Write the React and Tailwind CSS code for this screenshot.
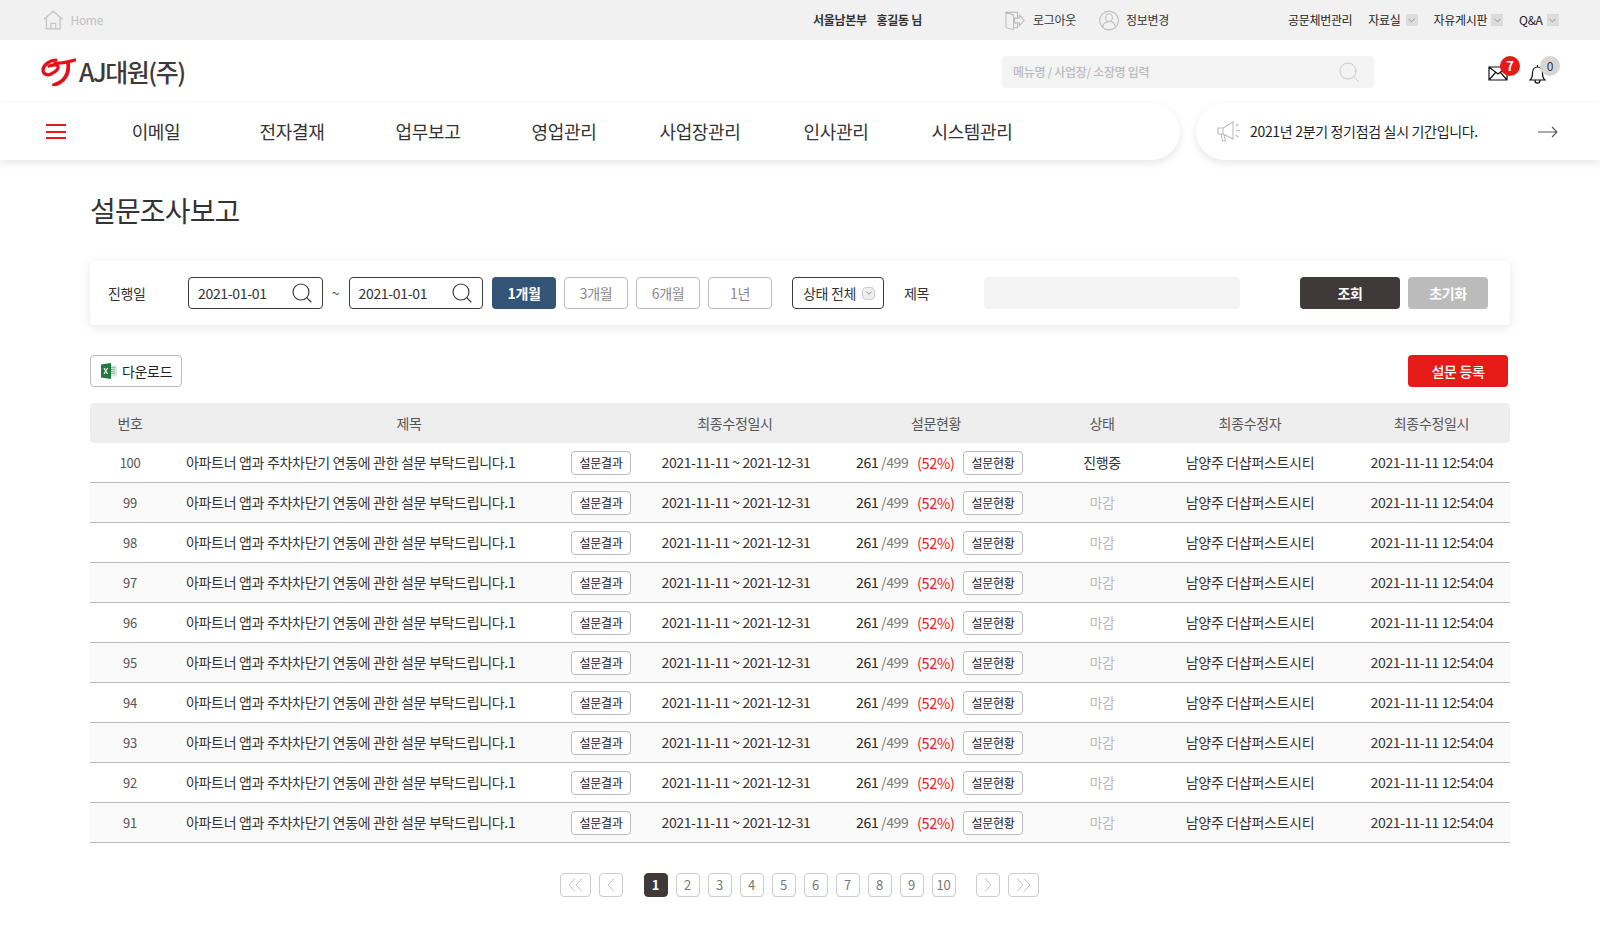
import { ChevronDown, Search } from "lucide-react";

const navItems = ["이메일", "전자결재", "업무보고", "영업관리", "사업장관리", "인사관리", "시스템관리"];
const columns = "grid grid-cols-[80px_478px_174px_228px_104px_192px_164px]";
const rows = [100, 99, 98, 97, 96, 95, 94, 93, 92, 91];

const ArrowBox = () => (
    <span className="flex h-3 w-3 items-center justify-center bg-[#dcdcdc]">
        <ChevronDown size={11} strokeWidth={1.3} className="text-[#666]" />
    </span>
);

const Logo = () => (
    <svg width="35" height="28" viewBox="0 0 35 28" fill="none" stroke="#e60f18" strokeLinecap="round">
        <path d="M15 2C9 2 2 7 2 12c0 4 4 6 8 4 4-2 8-5 7-8-1-2-5-1-9 0" strokeWidth="3.200" />
        <path d="M14 5c6 1 13-1 20-3" strokeWidth="3.200" />
        <path d="M27 5c1 7-1 13-5 17-3 3-6 4-9 5" strokeWidth="3.800" />
    </svg>
);

const HomeIcon = () => (
    <svg width="21" height="20" viewBox="0 0 21 20" fill="none" stroke="#c4c4c4" strokeWidth="1.300">
        <path d="M.8 9.500 10.500 1l9.700 8.500M3.500 7.500V19h14V7.500M8 19v-5.500h5V19" />
    </svg>
);

const LogoutIcon = () => (
    <svg width="21" height="19" viewBox="0 0 21 19" fill="none" stroke="#bdbdbd" strokeWidth="1.100">
        <path d="M1 1h12v6M13 12v5H9M1 1l8 3v15l-8-2zM10 7h5V4l5 5.500-5 5.500v-3h-5z" />
    </svg>
);

const UserIcon = () => (
    <svg width="21" height="21" viewBox="0 0 21 21" fill="none" stroke="#bdbdbd" strokeWidth="1.100">
        <circle cx="10.500" cy="10.500" r="9.800" />
        <ellipse cx="10.500" cy="7.500" rx="3.500" ry="4" />
        <path d="M4 18c0-4 2.500-6.500 6.500-6.500S17 14 17 18" />
    </svg>
);

const MailIcon = () => (
    <svg width="20" height="15" viewBox="0 0 20 15" fill="none" stroke="#111" strokeWidth="1.200">
        <path d="M1 1h18v13H1zM1 1l9 7 9-7M1 14l6.500-7.500M19 14l-6.500-7.500" />
    </svg>
);

const BellIcon = () => (
    <svg width="17" height="20" viewBox="0 0 17 20" fill="none" stroke="#111" strokeWidth="1.200">
        <path d="M1 16c2-1.500 2.500-3 2.500-7 0-3.500 2-6 5-6s5 2.500 5 6c0 4 .5 5.500 2.500 7zM6 16.500c0 3.500 5 3.500 5 0M8.500 1v2" />
    </svg>
);

const Megaphone = () => (
    <svg width="24" height="21" viewBox="0 0 24 21" fill="none" stroke="#bdbdbd" strokeWidth="1.100">
        <path d="M1 7h5l10-6v17L6 13H1zM6 7v6M4 13l1.500 7h3L7 13.500M19 9.500h4M18.500 5l3-2M18.500 14l3 2" />
    </svg>
);

const ExcelIcon = () => (
    <svg width="16" height="16" viewBox="0 0 16 16">
        <rect x="8" y="2.500" width="8" height="11" fill="#d8e8dc" />
        <path d="M10 4.500h4M10 6.500h4M10 8.500h4M10 10.500h4" stroke="#8fbc9c" />
        <path d="M0 1.500 10 0v16L0 14.500z" fill="#1f7a3d" />
        <path d="M3 5l3.500 6M6.500 5 3 11" stroke="#fff" strokeWidth="1.200" />
    </svg>
);

const PageArrow = ({ d, w }) => (
    <svg width={w} height="14" viewBox={`0 0 ${w} 14`} fill="none" stroke="#bbb" strokeWidth="0.900">
        <path d={d} />
    </svg>
);

const DateField = () => (
    <div className="flex h-8 w-[134.500px] items-center justify-between rounded border border-[#3f3a39] pl-[9px] pr-[8px] text-[14px] text-[#333]">
        <span>2021-01-01</span>
        <Search size={24} strokeWidth={1.100} className="text-[#333]" />
    </div>
);

const PeriodButton = ({ active, children }) => (
    <button className={active ? "h-8 w-16 rounded bg-[#325476] text-[14px] font-bold text-white" : "h-8 w-16 rounded border border-[#bbb] bg-white text-[14px] text-[#888]"}>
        {children}
    </button>
);

const SmallButton = ({ children }) => (
    <button className="h-6 w-[60px] shrink-0 rounded-sm border border-[#bbb] bg-white text-[12px] text-[#222]">{children}</button>
);

const PageBox = ({ active, wide, children }) => (
    <span className={`flex h-6 items-center justify-center rounded-sm border text-[13px] ${wide ? "w-[31px]" : "w-6"} ${active ? "border-[#3f3a39] bg-[#3f3a39] font-bold text-white" : "border-[#ccc] bg-white text-[#777]"}`}>
        {children}
    </span>
);

const App = () => {
    return (
        <div className="min-h-[947px] bg-white font-['Noto_Sans_CJK_KR','Noto_Sans',sans-serif] tracking-[-0.02em] text-[#333]">
            <div className="flex h-10 items-center whitespace-nowrap bg-[#f1f1f1] text-[12px]">
                <div className="ml-[43px] flex w-[60px] items-center gap-[7px] text-[#c0c0c0]">
                    <HomeIcon />
                    <span>Home</span>
                </div>
                <div className="ml-[710px] flex w-[107px] gap-[10px] font-bold text-[#333]">
                    <span>서울남본부</span>
                    <span>홍길동 님</span>
                </div>
                <div className="ml-[85px] flex w-[71px] items-center gap-2">
                    <LogoutIcon />
                    <span>로그아웃</span>
                </div>
                <div className="ml-[23px] flex w-[70px] items-center gap-[7px]">
                    <UserIcon />
                    <span>정보변경</span>
                </div>
                <div className="ml-[119px] flex items-center text-[#222]">
                    <span>공문체번관리</span>
                    <span className="ml-4">자료실</span>
                    <span className="ml-[5px]"><ArrowBox /></span>
                    <span className="ml-4">자유게시판</span>
                    <span className="ml-[4px]"><ArrowBox /></span>
                    <span className="ml-4">Q&A</span>
                    <span className="ml-[4px]"><ArrowBox /></span>
                </div>
            </div>

            <div className="flex h-[63px] items-center pl-[41px]">
                <Logo />
                <span className="ml-[3px] w-[106px] whitespace-nowrap text-[25px] font-medium tracking-[-0.06em] text-[#3f3a39]">AJ대원(주)</span>
                <div className="ml-[817px] flex h-8 w-[372px] items-center justify-between rounded bg-[#f3f3f3] pl-[11px] pr-[13px] text-[12px] font-medium text-[#bbb]">
                    <span>메뉴명 / 사업장/ 소장명 입력</span>
                    <Search size={24} strokeWidth={0.700} className="text-[#bbb]" />
                </div>
                <div className="relative ml-[114px] mt-[3px]">
                    <MailIcon />
                    <span className="absolute -right-[12px] -top-[10px] flex h-5 w-5 items-center justify-center rounded-full bg-[#e61a17] text-[13px] font-bold text-white">7</span>
                </div>
                <div className="relative ml-[21px] mt-[5px]">
                    <BellIcon />
                    <span className="absolute -right-[14px] -top-[8px] flex h-5 w-5 items-center justify-center rounded-full bg-[#d5d5d5] text-[12px] text-[#333]">0</span>
                </div>
            </div>

            <div className="flex h-[57px] gap-4">
                <div className="flex w-[1180px] items-center rounded-br-[30px] rounded-tr-[30px] bg-white pl-[46px] shadow-[0_3px_8px_rgba(0,0,0,0.1)]">
                    <div className="flex w-5 flex-col gap-[4.500px]">
                        <span className="h-[2px] bg-[#e61a17]" />
                        <span className="h-[2px] bg-[#e61a17]" />
                        <span className="h-[2px] bg-[#e61a17]" />
                    </div>
                    <div className="ml-[22px] grid grid-cols-[repeat(7,136px)] text-center text-[18px] text-[#333]">
                        {navItems.map((item) => (
                            <span key={item}>{item}</span>
                        ))}
                    </div>
                </div>
                <div className="flex flex-1 items-center rounded-bl-[30px] rounded-tl-[30px] bg-white pl-[21px] pr-[42px] shadow-[0_3px_8px_rgba(0,0,0,0.1)]">
                    <Megaphone />
                    <span className="ml-[9px] text-[14px] text-[#222]">2021년 2분기 정기점검 실시 기간입니다.</span>
                    <svg className="ml-auto" width="20" height="12" viewBox="0 0 20 12" fill="none" stroke="#555" strokeWidth="1.100">
                        <path d="M0 6h19M14 1l5 5-5 5" />
                    </svg>
                </div>
            </div>

            <div className="mx-[90px] w-[1420px]">
                <h1 className="mt-[28px] text-[28px] font-normal leading-[44px] tracking-[-0.03em] text-[#333]">설문조사보고</h1>

                <div className="mt-[29px] flex h-[64px] items-center rounded bg-white pl-[18px] text-[14px] shadow-[0_2px_12px_rgba(0,0,0,0.1)]">
                    <span className="w-[80px]">진행일</span>
                    <DateField />
                    <span className="w-[26px] text-center text-[#555]">~</span>
                    <DateField />
                    <div className="ml-[9px] flex gap-2">
                        <PeriodButton active>1개월</PeriodButton>
                        <PeriodButton>3개월</PeriodButton>
                        <PeriodButton>6개월</PeriodButton>
                        <PeriodButton>1년</PeriodButton>
                    </div>
                    <div className="ml-5 flex h-8 w-[92px] items-center justify-between rounded border border-[#3f3a39] pl-[10px] pr-2 text-[14px]">
                        <span>상태 전체</span>
                        <span className="flex h-[13px] w-[13px] items-center justify-center rounded-sm border border-[#ccc] bg-[#eee]">
                            <ChevronDown size={10} strokeWidth={1.200} />
                        </span>
                    </div>
                    <span className="ml-5 w-[80px]">제목</span>
                    <div className="h-8 w-[256px] rounded bg-[#f3f3f3]" />
                    <button className="ml-[60px] h-8 w-[100px] rounded bg-[#3f3a39] font-bold text-white">조회</button>
                    <button className="ml-2 h-8 w-[80px] rounded bg-[#bbb] font-bold text-white">초기화</button>
                </div>

                <div className="mt-[30px] flex items-center justify-between">
                    <button className="flex h-8 w-[92px] items-center rounded border border-[#bbb] bg-white pl-[10px] text-[14px] text-[#222]">
                        <ExcelIcon />
                        <span className="ml-[5px]">다운로드</span>
                    </button>
                    <button className="mr-[2px] h-8 w-[100px] rounded-sm bg-[#e61a17] text-[14px] font-medium text-white">설문 등록</button>
                </div>

                <div className={`${columns} mt-4 h-10 items-center rounded bg-[#eee] text-center text-[14px] text-[#555]`}>
                    <span>번호</span>
                    <span>제목</span>
                    <span>최종수정일시</span>
                    <span>설문현황</span>
                    <span>상태</span>
                    <span>최종수정자</span>
                    <span className="pl-[7px]">최종수정일시</span>
                </div>

                {rows.map((no, i) => (
                    <div key={no} className={`${columns} h-10 items-center border-b border-[#bbb] text-center text-[14px] text-[#333] ${i % 2 ? "bg-[#fafafa]" : "bg-white"}`}>
                        <span className="text-[13px] text-[#555]">{no}</span>
                        <div className="flex items-center justify-between pl-[16px] pr-[17px]">
                            <span>아파트너 앱과 주차차단기 연동에 관한 설문 부탁드립니다.1</span>
                            <SmallButton>설문결과</SmallButton>
                        </div>
                        <span className="pl-[2px] tracking-[-0.028em]">2021-11-11 ~ 2021-12-31</span>
                        <div className="flex items-center pl-[34px]">
                            <span className="w-[22px] text-left text-[#222]">261</span>
                            <span className="ml-[3px] w-[28px] text-left text-[#777]">/499</span>
                            <span className="ml-[8px] w-[38px] text-left text-[14.500px] text-[#ee1c1c]">(52%)</span>
                            <span className="ml-[8px]"><SmallButton>설문현황</SmallButton></span>
                        </div>
                        <span className={i === 0 ? "text-[#333]" : "text-[#bbb]"}>{i === 0 ? "진행중" : "마감"}</span>
                        <span>남양주 더샵퍼스트시티</span>
                        <span className="pl-[8px] tracking-[-0.025em]">2021-11-11 12:54:04</span>
                    </div>
                ))}

                <div className="mt-[30px] flex items-center justify-center gap-2 pr-[2px]">
                    <PageBox wide><PageArrow w={15} d="M7 .5 1 7l6 6.500M14 .5 8 7l6 6.500" /></PageBox>
                    <PageBox><PageArrow w={8} d="M7 .5 1 7l6 6.500" /></PageBox>
                    <span className="w-[5px]" />
                    {[1, 2, 3, 4, 5, 6, 7, 8, 9, 10].map((n) => (
                        <PageBox key={n} active={n === 1}>{n}</PageBox>
                    ))}
                    <span className="w-1" />
                    <PageBox><PageArrow w={8} d="M1 .5 7 7l-6 6.500" /></PageBox>
                    <PageBox wide><PageArrow w={15} d="M1 .5 7 7l-6 6.500M8 .5 14 7l-6 6.500" /></PageBox>
                </div>
            </div>
        </div>
    );
};
export default App;
